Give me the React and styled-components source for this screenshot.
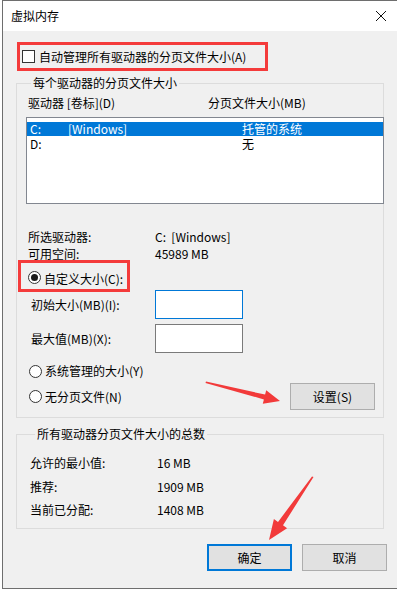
import React from 'react';
import styled, { createGlobalStyle } from 'styled-components';

const GlobalStyle = createGlobalStyle`
  html, body {
    margin: 0;
    padding: 0;
    background: #ffffff;
  }
  body {
    font-family: "Noto Sans CJK SC", "Noto Sans", sans-serif;
    font-size: 12px;
    color: #000;
  }
`;

const accent = '#0078d7';
const redMark = '#f43b3b';

const Page = styled.div`
  position: relative;
  width: 397px;
  height: 593px;
  overflow: hidden;
`;

const Window = styled.div`
  margin-left: 2px;
  height: 589px;
  box-sizing: border-box;
  border-left: 1px solid #6e6e6e;
  border-top: 1px solid #6e6e6e;
  border-bottom: 1px solid #6e6e6e;
  background: #f0f0f0;
  display: flex;
  flex-direction: column;
`;

const TitleBar = styled.div`
  height: 30px;
  flex: none;
  background: #fff;
  display: flex;
  align-items: center;
  justify-content: space-between;
  padding: 0 10px 0 8px;
  line-height: 16px;
`;

const Body = styled.div`
  flex: 1;
  display: flex;
  flex-direction: column;
  padding: 0 10px 0 13px;
`;

const MarkBox = styled.div`
  box-sizing: border-box;
  border: 3px solid ${redMark};
  display: flex;
  align-items: ${p => (p.$top ? 'flex-start' : 'center')};
  width: ${p => p.$w}px;
  height: ${p => p.$h}px;
  margin: ${p => p.$m};
  padding: ${p => p.$pad};
`;

const Checkbox = styled.span`
  width: 13px;
  height: 13px;
  box-sizing: border-box;
  border: 1px solid #333;
  background: #fff;
  flex: none;
  margin-right: 4px;
`;

const Radio = styled.span`
  width: 13px;
  height: 13px;
  box-sizing: border-box;
  border: 1px solid #333;
  border-radius: 50%;
  background: #fff;
  flex: none;
  margin-right: 3px;
  display: flex;
  align-items: center;
  justify-content: center;
  &::after {
    content: '';
    display: ${p => (p.$on ? 'block' : 'none')};
    width: 7px;
    height: 7px;
    border-radius: 50%;
    background: #1a1a1a;
  }
`;

const Label = styled.span`
  line-height: 16px;
  white-space: nowrap;
`;

const Group = styled.fieldset`
  margin: ${p => p.$m};
  padding: 0 0 ${p => p.$pb}px ${p => p.$pl}px;
  border: 1px solid #dcdcdc;
  width: 368px;
  box-sizing: border-box;
  min-width: 0;
`;

const Legend = styled.legend`
  margin-left: 5px;
  padding: 0 2px;
  line-height: 16px;
`;

const ColumnHead = styled.div`
  display: grid;
  grid-template-columns: 180px 1fr;
  margin-top: 4px;
  padding-left: 2px;
  line-height: 16px;
`;

const ListBox = styled.div`
  margin-top: 6px;
  width: 358px;
  height: 87px;
  box-sizing: border-box;
  border: 1px solid #828790;
  background: #fff;
  padding-top: 4px;
`;

const ListRow = styled.div`
  display: grid;
  grid-template-columns: 38px 174px 1fr;
  height: 14px;
  line-height: 14px;
  padding-left: 3px;
  margin-bottom: 1px;
  background: ${p => (p.$selected ? accent : 'transparent')};
  color: ${p => (p.$selected ? '#fff' : '#000')};
`;

const InfoGrid = styled.div`
  display: grid;
  grid-template-columns: ${p => p.$col}px 1fr;
  row-gap: ${p => p.$gap}px;
  margin-top: ${p => p.$mt}px;
  padding-left: ${p => p.$pl}px;
  line-height: ${p => p.$lh}px;
`;

const SizeGrid = styled.div`
  display: grid;
  grid-template-columns: 129px 88px;
  row-gap: 5px;
  align-items: center;
  margin-top: -2px;
`;

const SizeLabel = styled.span`
  padding-left: 5px;
  line-height: 16px;
`;

const TextBox = styled.div`
  height: 29px;
  box-sizing: border-box;
  background: #fff;
  border: 1px solid ${p => (p.$focus ? accent : '#7a7a7a')};
`;

const OptionRow = styled.div`
  display: flex;
  align-items: center;
  justify-content: space-between;
  padding-left: 3px;
  margin-top: ${p => p.$mt}px;
  min-height: 16px;
`;

const Option = styled.div`
  display: flex;
  align-items: center;
`;

const Button = styled.div`
  width: 85px;
  height: 27px;
  box-sizing: border-box;
  display: flex;
  align-items: center;
  justify-content: center;
  background: #e1e1e1;
  border: ${p => (p.$default ? `2px solid ${accent}` : '1px solid #adadad')};
  margin-right: ${p => p.$mr || 0}px;
  line-height: 16px;
`;

const ButtonBar = styled.div`
  display: flex;
  justify-content: flex-end;
  gap: 10px;
  margin-top: 15px;
`;

const Overlay = styled.svg`
  position: absolute;
  left: 0;
  top: 0;
  pointer-events: none;
`;

const CloseIcon = () => (
  <svg width="12" height="12" viewBox="0 0 12 12">
    <path d="M1 1 L11 11 M11 1 L1 11" stroke="#111" strokeWidth="1" fill="none" />
  </svg>
);

export default function App() {
  return (
    <Page>
      <GlobalStyle />
      <Window>
        <TitleBar>
          <Label>虚拟内存</Label>
          <CloseIcon />
        </TitleBar>
        <Body>
          <MarkBox $w={251} $h={29} $m="11px 0 0 1px" $pad="0 0 0 2px">
            <Checkbox />
            <Label>自动管理所有驱动器的分页文件大小(A)</Label>
          </MarkBox>

          <Group $m="4px 0 0 0" $pl={9} $pb={7}>
            <Legend>每个驱动器的分页文件大小</Legend>
            <ColumnHead>
              <span>驱动器 [卷标](D)</span>
              <span>分页文件大小(MB)</span>
            </ColumnHead>
            <ListBox>
              <ListRow $selected>
                <span>C:</span>
                <span>[Windows]</span>
                <span>托管的系统</span>
              </ListRow>
              <ListRow>
                <span>D:</span>
                <span></span>
                <span>无</span>
              </ListRow>
            </ListBox>

            <InfoGrid $col={127} $gap={3} $mt={26} $pl={2} $lh={14}>
              <span>所选驱动器:</span>
              <span>C:&nbsp;&nbsp;[Windows]</span>
              <span>可用空间:</span>
              <span>45989 MB</span>
            </InfoGrid>

            <MarkBox $top $w={112} $h={32} $m="-1px 0 0 -8px" $pad="8px 0 0 7px">
              <Radio $on />
              <Label>自定义大小(C):</Label>
            </MarkBox>

            <SizeGrid>
              <SizeLabel>初始大小(MB)(I):</SizeLabel>
              <TextBox $focus />
              <SizeLabel>最大值(MB)(X):</SizeLabel>
              <TextBox />
            </SizeGrid>

            <OptionRow $mt={10}>
              <Option>
                <Radio />
                <Label>系统管理的大小(Y)</Label>
              </Option>
            </OptionRow>
            <OptionRow $mt={4}>
              <Option>
                <Radio />
                <Label>无分页文件(N)</Label>
              </Option>
              <Button $mr={8}>设置(S)</Button>
            </OptionRow>
          </Group>

          <Group $m="8px 0 0 0" $pl={13} $pb={10}>
            <Legend>所有驱动器分页文件大小的总数</Legend>
            <InfoGrid $col={127} $gap={7.5} $mt={13} $pl={0} $lh={16}>
              <span>允许的最小值:</span>
              <span>16 MB</span>
              <span>推荐:</span>
              <span>1909 MB</span>
              <span>当前已分配:</span>
              <span>1408 MB</span>
            </InfoGrid>
          </Group>

          <ButtonBar>
            <Button $default>确定</Button>
            <Button>取消</Button>
          </ButtonBar>
        </Body>
      </Window>

      <Overlay width="397" height="593" viewBox="0 0 397 593">
        <polygon
          fill="#f23a3a"
          points="206,381.5 265.1,394.6 266.2,390.2 280,401 262.8,403.8 263.9,399.4 205.5,383"
        />
        <polygon
          fill="#f23a3a"
          points="313.5,477 283,525.3 287.1,528.2 269,540 273.9,519 278,521.9 312,476.5"
        />
      </Overlay>
    </Page>
  );
}
